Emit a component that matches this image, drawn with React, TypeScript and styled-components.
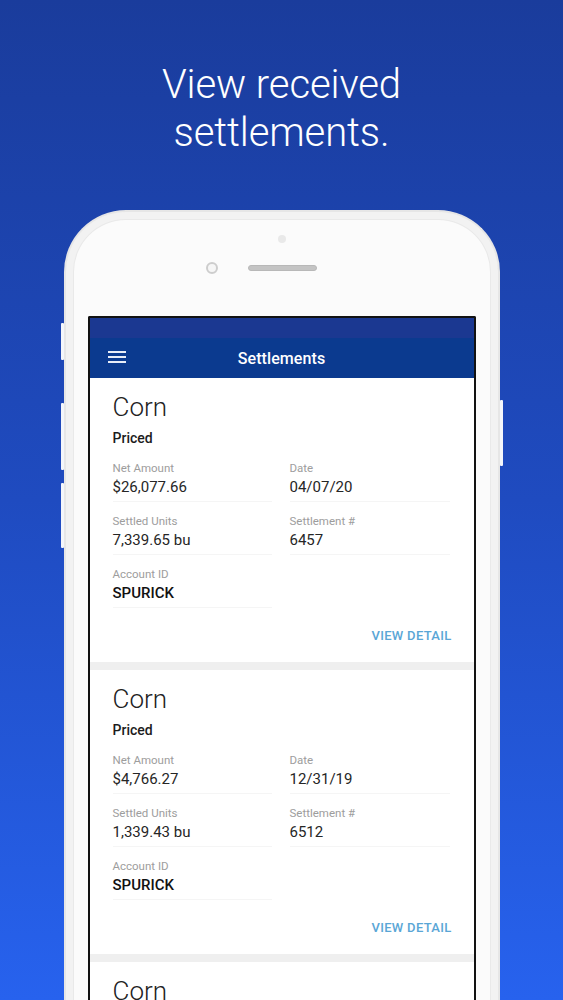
import styled, { createGlobalStyle } from 'styled-components';

const GlobalStyle = createGlobalStyle`
  html, body {
    margin: 0;
    padding: 0;
  }
  body {
    font-family: Roboto, "Liberation Sans", sans-serif;
    -webkit-font-smoothing: antialiased;
  }
`;

const Page = styled.div`
  width: 563px;
  height: 1000px;
  overflow: hidden;
  display: flex;
  flex-direction: column;
  align-items: center;
  background: linear-gradient(180deg, #1a3c9c 0%, #1f4bc0 50%, #2762ee 100%);
`;

const Headline = styled.h1`
  margin: 61px 0 0;
  font-family: Roboto, sans-serif;
  font-weight: 300;
  font-size: 40px;
  line-height: 48px;
  letter-spacing: -0.1px;
  color: #ffffff;
  text-align: center;
`;

const Phone = styled.div`
  position: relative;
  margin-top: 53px;
  width: 436px;
  flex: 1;
  box-sizing: border-box;
  display: flex;
  flex-direction: column;
  background: #fbfbfb;
  border: 2px solid #e6e6e6;
  border-bottom: none;
  border-radius: 62px 62px 0 0;
  box-shadow: inset 0 0 0 7px #f2f2f2, inset 0 0 0 8px #e9e9e9;
`;

const SideButton = styled.span<{ $side: 'left' | 'right'; $top: number; $height: number }>`
  position: absolute;
  ${({ $side }) => ($side === 'left' ? 'left: -5px;' : 'right: -5px;')}
  top: ${({ $top }) => $top}px;
  width: 3px;
  height: ${({ $height }) => $height}px;
  background: #f4f6fb;
  border-radius: 1px;
`;

const PhoneTop = styled.div`
  height: 104px;
  display: flex;
  flex-direction: column;
  align-items: center;
`;

const FrontSensor = styled.span`
  margin-top: 23px;
  width: 8px;
  height: 8px;
  border-radius: 50%;
  background: #e9e9e9;
`;

const EarRow = styled.div`
  margin-top: 19px;
  display: flex;
  align-items: center;
  gap: 30px;
  margin-left: -40px;
`;

const Camera = styled.span`
  width: 12px;
  height: 12px;
  border-radius: 50%;
  background: #f6f6f6;
  border: 2px solid #cdcdcd;
  box-sizing: border-box;
`;

const Speaker = styled.span`
  width: 69px;
  height: 6px;
  border-radius: 3px;
  background: #c4c4c4;
  border: 1px solid #b8b8b8;
  box-sizing: border-box;
`;

const Screen = styled.div`
  flex: 1;
  margin: 0 22px;
  border: 2px solid #121212;
  border-bottom: none;
  border-radius: 2px 2px 0 0;
  background: #efefef;
  display: flex;
  flex-direction: column;
  overflow: hidden;
`;

const StatusBar = styled.div`
  height: 20px;
  background: #1b3891;
`;

const NavBar = styled.div`
  position: relative;
  height: 40px;
  background: #0b3a8f;
  display: flex;
  align-items: center;
  justify-content: center;
`;

const MenuIcon = styled.span`
  position: absolute;
  left: 18px;
  top: 13px;
  width: 18px;
  display: flex;
  flex-direction: column;
  gap: 3px;

  span {
    height: 2px;
    background: #e8edf8;
  }
`;

const NavTitle = styled.div`
  font-family: Roboto, sans-serif;
  font-weight: 500;
  font-size: 16px;
  color: #ffffff;
  letter-spacing: 0.1px;
`;

const Card = styled.div`
  background: #ffffff;
  padding: 14px 22px 18px 23px;
  margin-bottom: 8px;
  display: flex;
  flex-direction: column;
`;

const Crop = styled.div`
  font-family: Roboto, sans-serif;
  font-weight: 300;
  font-size: 26px;
  line-height: 30px;
  color: #222;
`;

const Status = styled.div`
  margin-top: 7px;
  font-family: Roboto, sans-serif;
  font-weight: 500;
  font-size: 14px;
  line-height: 18px;
  color: #1c1c1c;
`;

const Fields = styled.div`
  margin-top: 14px;
  display: grid;
  grid-template-columns: 159px 160px;
  column-gap: 18px;
  row-gap: 12px;
`;

const Field = styled.div`
  display: flex;
  flex-direction: column;
  gap: 2px;
`;

const Label = styled.div`
  font-family: Roboto, sans-serif;
  font-size: 11.5px;
  line-height: 14px;
  color: #9d9d9d;
`;

const Value = styled.div<{ $strong?: boolean }>`
  font-family: Roboto, sans-serif;
  font-size: 15px;
  line-height: 20px;
  font-weight: ${({ $strong }) => ($strong ? 500 : 400)};
  color: ${({ $strong }) => ($strong ? '#111' : '#262626')};
  padding-bottom: 4px;
  border-bottom: 1px solid #f5f5f5;
`;

const Action = styled.div`
  margin-top: 20px;
  align-self: flex-end;
  font-family: Roboto, sans-serif;
  font-weight: 500;
  font-size: 13px;
  line-height: 16px;
  letter-spacing: 0.3px;
  color: #5aa6d6;
`;

type Settlement = {
  net: string;
  date: string;
  units: string;
  number: string;
  account: string;
};

const settlements: Settlement[] = [
  { net: '$26,077.66', date: '04/07/20', units: '7,339.65 bu', number: '6457', account: 'SPURICK' },
  { net: '$4,766.27', date: '12/31/19', units: '1,339.43 bu', number: '6512', account: 'SPURICK' },
  { net: '$12,410.08', date: '11/20/19', units: '3,512.00 bu', number: '6398', account: 'SPURICK' },
];

const SettlementCard = ({ item }: { item: Settlement }) => (
  <Card>
    <Crop>Corn</Crop>
    <Status>Priced</Status>
    <Fields>
      <Field>
        <Label>Net Amount</Label>
        <Value>{item.net}</Value>
      </Field>
      <Field>
        <Label>Date</Label>
        <Value>{item.date}</Value>
      </Field>
      <Field>
        <Label>Settled Units</Label>
        <Value>{item.units}</Value>
      </Field>
      <Field>
        <Label>Settlement #</Label>
        <Value>{item.number}</Value>
      </Field>
      <Field>
        <Label>Account ID</Label>
        <Value $strong>{item.account}</Value>
      </Field>
    </Fields>
    <Action>VIEW DETAIL</Action>
  </Card>
);

export default function App() {
  return (
    <>
      <GlobalStyle />
      <Page>
        <Headline>
          View received
          <br />
          settlements.
        </Headline>
        <Phone>
          <SideButton $side="left" $top={111} $height={37} />
          <SideButton $side="left" $top={191} $height={67} />
          <SideButton $side="left" $top={271} $height={65} />
          <SideButton $side="right" $top={188} $height={66} />
          <PhoneTop>
            <FrontSensor />
            <EarRow>
              <Camera />
              <Speaker />
            </EarRow>
          </PhoneTop>
          <Screen>
            <StatusBar />
            <NavBar>
              <MenuIcon>
                <span />
                <span />
                <span />
              </MenuIcon>
              <NavTitle>Settlements</NavTitle>
            </NavBar>
            {settlements.map((s) => (
              <SettlementCard key={s.number} item={s} />
            ))}
          </Screen>
        </Phone>
      </Page>
    </>
  );
}
